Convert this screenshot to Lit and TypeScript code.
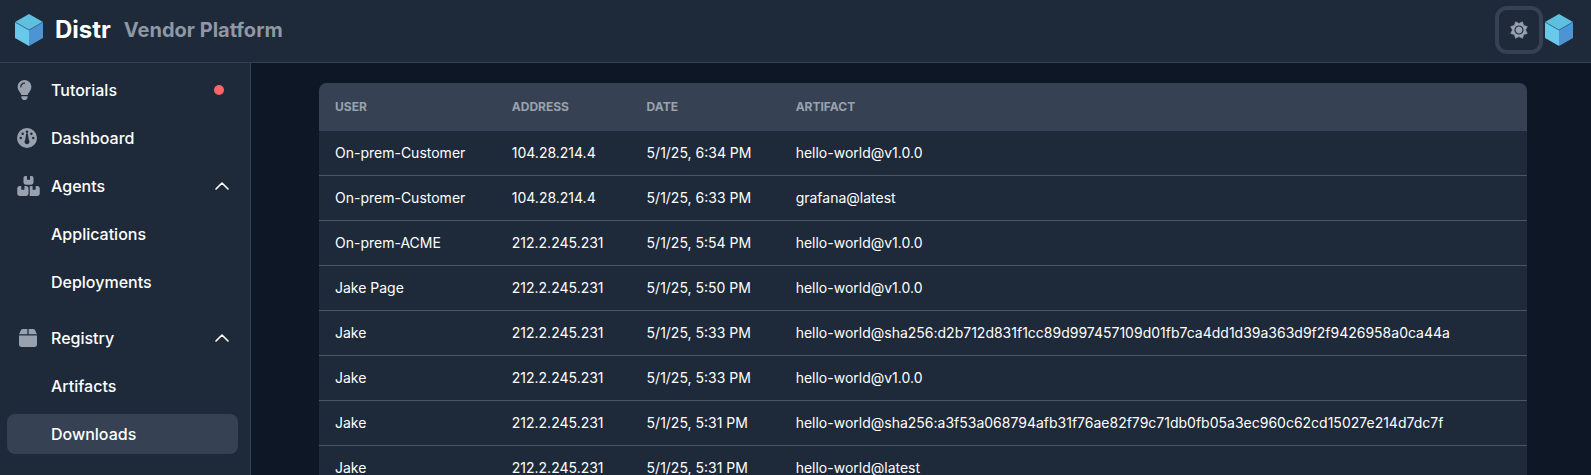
import { LitElement, html, css, nothing } from "lit";
import { customElement } from "lit/decorators.js";
import { classMap } from "lit/directives/class-map.js";

const cube = html`<svg class="cube" viewBox="0 0 28 32" aria-hidden="true">
  <path d="M14 0 28 8 14 16 0 8Z" fill="#5fbfdf" />
  <path d="M0 8 14 16V32L0 24Z" fill="#68c9ea" />
  <path d="M28 8 14 16V32L28 24Z" fill="#4e94d3" />
  <path d="M0 8 14 16 28 8" fill="none" stroke="#2b6f98" stroke-width=".9" />
</svg>`;

const icons: Record<string, unknown> = {
  bulb: html`<svg viewBox="0 0 384 512" width="15" height="20" aria-hidden="true">
    <path d="M272 384c9.600-31.900 29.500-59.100 49.200-86.200c5.200-7.100 10.400-14.200 15.400-21.400c19.800-28.500 31.400-63 31.400-100.300C368 78.800 289.200 0 192 0S16 78.800 16 176c0 37.300 11.600 71.900 31.400 100.300c5 7.200 10.200 14.300 15.400 21.400c19.800 27.100 39.700 54.400 49.200 86.200H272zM192 512c44.200 0 80-35.800 80-80V416H112v16c0 44.200 35.800 80 80 80zM112 176c0 8.800-7.200 16-16 16s-16-7.200-16-16c0-61.900 50.100-112 112-112c8.800 0 16 7.200 16 16s-7.200 16-16 16c-44.200 0-80 35.800-80 80z" />
  </svg>`,
  gauge: html`<svg viewBox="0 0 512 512" width="20" height="20" aria-hidden="true">
    <path d="M0 256a256 256 0 1 1 512 0A256 256 0 1 1 0 256zM288 96a32 32 0 1 0-64 0 32 32 0 1 0 64 0zM256 416c35.300 0 64-28.700 64-64c0-17.400-6.900-33.100-18.100-44.600L280 160c0-13-10.700-24-24-24s-24 11-24 24L210.100 307.400C198.900 318.900 192 334.600 192 352c0 35.300 28.700 64 64 64zM176 144a32 32 0 1 0-64 0 32 32 0 1 0 64 0zM96 288a32 32 0 1 0 0-64 32 32 0 1 0 0 64zm352-32a32 32 0 1 0-64 0 32 32 0 1 0 64 0zM368 176a32 32 0 1 0 0-64 32 32 0 1 0 0 64z" />
  </svg>`,
  boxes: html`<svg viewBox="0 0 576 512" width="23" height="20" aria-hidden="true">
    <path d="M248 0H208c-26.500 0-48 21.500-48 48V160c0 35.300 28.700 64 64 64H352c35.300 0 64-28.700 64-64V48c0-26.500-21.500-48-48-48H328V80c0 8.800-7.200 16-16 16H264c-8.800 0-16-7.200-16-16V0zM64 256c-35.300 0-64 28.700-64 64V448c0 35.300 28.700 64 64 64H224c35.300 0 64-28.700 64-64V320c0-35.300-28.700-64-64-64H184v80c0 8.800-7.200 16-16 16H120c-8.800 0-16-7.200-16-16V256H64zM352 512H512c35.300 0 64-28.700 64-64V320c0-35.300-28.700-64-64-64H472v80c0 8.800-7.200 16-16 16H408c-8.800 0-16-7.200-16-16V256H352c-15 0-28.800 5.100-39.700 13.800c4.900 10.400 7.700 22 7.700 34.200V464c0 12.200-2.800 23.800-7.700 34.200C323.200 506.900 337 512 352 512z" />
  </svg>`,
  box: html`<svg class="indent" viewBox="0 0 448 448" width="18" height="18" aria-hidden="true">
    <path d="M50.700 26.500 0 128H208V0H93.700C75.500 0 58.900 10.300 50.700 26.500zM240 0V128H448L397.300 26.500C389.100 10.300 372.500 0 354.300 0H240zM448 160H0V384c0 35.300 28.700 64 64 64H384c35.300 0 64-28.700 64-64V160z" />
  </svg>`,
};

const chevron = html`<svg class="chevron" viewBox="0 0 14 8" width="14" height="8" aria-hidden="true">
  <path d="M1 7 7 1 13 7" />
</svg>`;

const sunPoints = Array.from({ length: 16 }, (_, i) => {
  const radius = i % 2 ? 9 : 6.5;
  const angle = (i * Math.PI) / 8;
  return `${(radius * Math.sin(angle)).toFixed(2)},${(-radius * Math.cos(angle)).toFixed(2)}`;
}).join(" ");
const sun = html`<svg class="sun" viewBox="-10 -10 20 20" width="20" height="20" aria-hidden="true">
  <polygon class="rays" points=${sunPoints} />
  <circle class="ring" r="4" />
</svg>`;

interface NavItem {
  label: string;
  icon?: string;
  dot?: boolean;
  active?: boolean;
  children?: NavItem[];
}

const nav: NavItem[] = [
  { label: "Tutorials", icon: "bulb", dot: true },
  { label: "Dashboard", icon: "gauge" },
  { label: "Agents", icon: "boxes", children: [{ label: "Applications" }, { label: "Deployments" }] },
  { label: "Registry", icon: "box", children: [{ label: "Artifacts" }, { label: "Downloads", active: true }] },
];

const downloads = [
  ["On-prem-Customer", "104.28.214.4", "5/1/25, 6:34 PM", "hello-world@v1.0.0"],
  ["On-prem-Customer", "104.28.214.4", "5/1/25, 6:33 PM", "grafana@latest"],
  ["On-prem-ACME", "212.2.245.231", "5/1/25, 5:54 PM", "hello-world@v1.0.0"],
  ["Jake Page", "212.2.245.231", "5/1/25, 5:50 PM", "hello-world@v1.0.0"],
  ["Jake", "212.2.245.231", "5/1/25, 5:33 PM", "hello-world@sha256:d2b712d831f1cc89d997457109d01fb7ca4dd1d39a363d9f2f9426958a0ca44a"],
  ["Jake", "212.2.245.231", "5/1/25, 5:33 PM", "hello-world@v1.0.0"],
  ["Jake", "212.2.245.231", "5/1/25, 5:31 PM", "hello-world@sha256:a3f53a068794afb31f76ae82f79c71db0fb05a3ec960c62cd15027e214d7dc7f"],
  ["Jake", "212.2.245.231", "5/1/25, 5:31 PM", "hello-world@latest"],
];

@customElement("app-header")
export class AppHeader extends LitElement {
  static styles = css`
    :host { display: block; }
    .bar {
      display: flex; align-items: center; justify-content: space-between;
      height: 62px; padding: 0 18px 0 15px; box-sizing: content-box;
      background: #1e2a39; border-bottom: 1px solid #364153;
    }
    .brand { display: flex; align-items: center; color: #fff; text-decoration: none; padding-bottom: 2px; }
    .name { margin-left: 12px; font-size: 24px; line-height: 32px; font-weight: 700; }
    .product { margin-left: 13px; font-size: 20px; line-height: 32px; font-weight: 700; color: #8e98a6; }
    .cube { display: block; width: 28px; height: 32px; }
    .actions { display: flex; align-items: center; gap: 2px; padding-bottom: 2px; }
    button { font: inherit; padding: 0; background: none; border: 0; cursor: pointer; }
    .theme {
      display: grid; place-items: center; width: 48px; height: 48px; box-sizing: border-box;
      border: 4px solid #364153; border-radius: 12px;
    }
    .rays { fill: #99a1af; stroke: #99a1af; stroke-width: .6; stroke-linejoin: round; }
    .ring { fill: #99a1af; stroke: #1e2a39; stroke-width: 1.200; }
  `;
  render() {
    return html`<header class="bar">
      <a class="brand" href="#">${cube}<span class="name">Distr</span><span class="product">Vendor Platform</span></a>
      <div class="actions">
        <button class="theme" aria-label="Toggle color scheme">${sun}</button>
        <button aria-label="Account">${cube}</button>
      </div>
    </header>`;
  }
}

@customElement("app-sidebar")
export class AppSidebar extends LitElement {
  static styles = css`
    :host { display: block; background: #1e2a39; border-right: 1px solid #364153; }
    nav { padding: 7px 12px 7px 7px; }
    ul { list-style: none; margin: 0; padding: 0; display: flex; flex-direction: column; gap: 8px; }
    .sub { padding: 8px 0; }
    .item {
      display: flex; align-items: center; width: 100%; box-sizing: border-box; padding: 8px 9px 8px 10px;
      border: 0; border-radius: 8px; background: none; color: #fff; text-align: left; text-decoration: none;
      font: 500 16px/24px Inter, sans-serif; cursor: pointer;
    }
    .active { background: #364153; }
    .icon { display: flex; align-items: center; width: 34px; fill: #99a1af; }
    .indent { margin-left: 2px; }
    .label { flex: 1; }
    .dot { width: 10px; height: 10px; margin-right: 5px; border-radius: 50%; background: #ff6467; }
    .chevron { fill: none; stroke: #fff; stroke-width: 1.600; stroke-linecap: round; stroke-linejoin: round; }
  `;
  item(i: NavItem): unknown {
    const body = html`<span class="icon">${i.icon ? icons[i.icon] : nothing}</span><span class="label">${i.label}</span>`;
    return html`<li>
      ${i.children
        ? html`<button class="item" aria-expanded="true">${body}${chevron}</button>
            <ul class="sub">${i.children.map((c) => this.item(c))}</ul>`
        : html`<a class=${classMap({ item: true, active: !!i.active })} href="#">${body}${i.dot ? html`<span class="dot"></span>` : nothing}</a>`}
    </li>`;
  }
  render() {
    return html`<nav aria-label="Main"><ul>${nav.map((i) => this.item(i))}</ul></nav>`;
  }
}

@customElement("downloads-table")
export class DownloadsTable extends LitElement {
  static styles = css`
    :host { display: block; overflow: hidden; border-radius: 8px 8px 0 0; background: #1e2a39; }
    table { width: 100%; border-collapse: collapse; text-align: left; color: #fff; font-size: 14px; line-height: 20px; }
    th { padding: 16px; background: #364153; color: #99a1af; font-size: 12px; line-height: 16px; font-weight: 700; text-transform: uppercase; }
    td { padding: 12px 16px; white-space: nowrap; }
    tbody tr { border-bottom: 1px solid #4a5565; }
  `;
  render() {
    return html`<table>
      <thead><tr>${["User", "Address", "Date", "Artifact"].map((h) => html`<th scope="col">${h}</th>`)}</tr></thead>
      <tbody>${downloads.map((r) => html`<tr>${r.map((c) => html`<td>${c}</td>`)}</tr>`)}</tbody>
    </table>`;
  }
}

@customElement("app-root")
export class AppRoot extends LitElement {
  static styles = css`
    :host {
      display: flex; flex-direction: column; height: 100vh; overflow: hidden;
      background: #0e1726; color: #fff; font-family: Inter, sans-serif;
    }
    .body { flex: 1; min-height: 0; display: grid; grid-template-columns: 251px minmax(0, 1fr); }
    main { padding: 20px 64px 0 68px; overflow: hidden; }
    app-sidebar { overflow: hidden; }
  `;
  render() {
    return html`<app-header></app-header>
      <div class="body">
        <app-sidebar></app-sidebar>
        <main><downloads-table></downloads-table></main>
      </div>`;
  }
}
